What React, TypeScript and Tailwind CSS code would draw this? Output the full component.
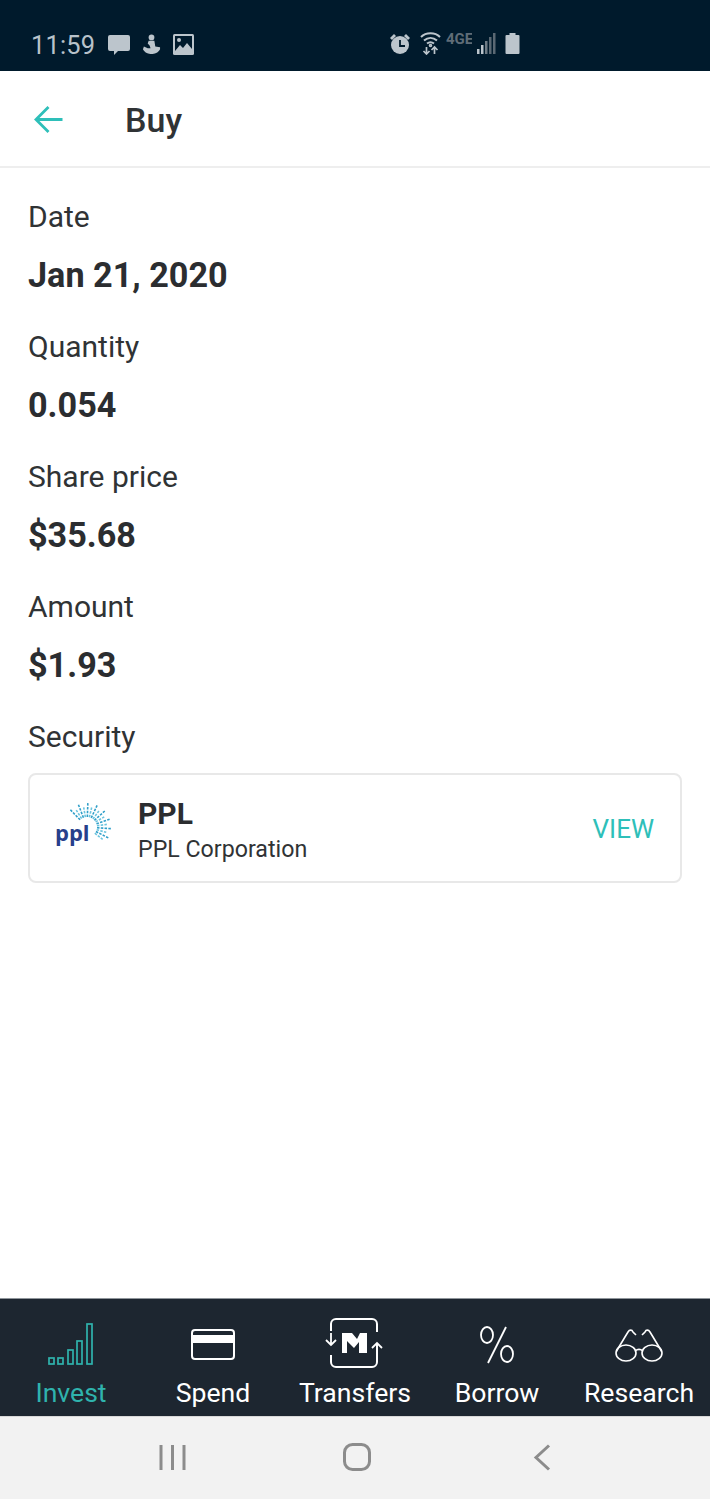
import React from "react";

const Field = ({ label, value }: { label: string; value: string }) => (
  <div className="flex flex-col h-[130px]">
    <div className="h-[58px] pt-[30px] leading-[38px] text-[30px] text-[#303335]">{label}</div>
    <div className="h-[72px] text-[34.2px] leading-[44px] font-bold text-[#2b2d30] pt-[27px]">{value}</div>
  </div>
);

const Rays = () => {
  const rays: React.ReactNode[] = [];
  for (let i = 0; i < 16; i++) {
    const a = (-44 + i * 11.5) * (Math.PI / 180);
    const c = i % 2 === 0 ? "#2f9fc9" : "#6cc4de";
    const r0 = 10;
    const r1 = i % 2 === 0 ? 25 : 20;
    rays.push(
      <line key={i} x1={33 + r0 * Math.sin(a)} y1={24 - r0 * Math.cos(a)} x2={33 + r1 * Math.sin(a)} y2={24 - r1 * Math.cos(a)} stroke={c} strokeWidth="1.6" strokeDasharray="2.5 1.3" />
    );
  }
  return (
    <svg className="absolute left-0 top-0" width="60" height="50" viewBox="0 0 60 50">
      {rays}
    </svg>
  );
};

const Nav = ({ label, active, children }: { label: string; active?: boolean; children: React.ReactNode }) => (
  <div className={`flex flex-col items-center ${active ? "text-[#2fb3ad]" : "text-white"}`}>
    <div className="h-[58px] w-full flex items-end justify-center">{children}</div>
    <div className="text-[26.6px] leading-[36px] mt-[7px] whitespace-nowrap">{label}</div>
  </div>
);

export default function App() {
  return (
    <div className="w-[710px] h-[1499px] flex flex-col bg-white overflow-hidden font-['Roboto',sans-serif]">
      {/* status bar */}
      <div className="h-[71px] shrink-0 bg-[#001a2c] flex items-end pb-[11px] relative text-[#b8c2ca]">
        <span className="ml-[31px] text-[25.4px] leading-[30px] tracking-[0.2px]">11:59</span>
        <svg className="ml-[12px] mb-[4px]" width="24" height="22" viewBox="0 0 24 22" fill="#bcc5cc"><path d="M3 1h18a2 2 0 0 1 2 2v12a2 2 0 0 1-2 2H11l-4 4v-4H3a2 2 0 0 1-2-2V3a2 2 0 0 1 2-2z" /></svg>
        <svg className="ml-[11px] mb-[5px]" width="19" height="21" viewBox="0 0 20 22" fill="#bcc5cc"><circle cx="10" cy="3.5" r="3" /><path d="M7 7h6l1 6 5 1v2c-2 4-6 5-9 5s-7-1-9-5l1-3 4 2h3l-1-3-2-2z" /></svg>
        <svg className="ml-[12px] mb-[5px]" width="21" height="21" viewBox="0 0 21 21"><rect width="21" height="21" rx="1.5" fill="#bcc5cc" /><rect x="2" y="2" width="17" height="15" fill="#001a2c" /><circle cx="6" cy="6" r="2" fill="#bcc5cc" /><path d="M2 17l5-6 3 3 4-5 5 6v2z" fill="#bcc5cc" /></svg>

        <svg className="absolute left-[389px] top-[33px]" width="22" height="22" viewBox="0 0 22 22" fill="#bcc5cc"><circle cx="11" cy="12" r="9" /><path d="M1 5l4-4 2 2-4 4zM21 5l-4-4-2 2 4 4z" /><path d="M11 7v6h5" stroke="#001a2c" strokeWidth="1.8" fill="none" /></svg>
        <svg className="absolute left-[420px] top-[31px]" width="21" height="24" viewBox="0 0 21 24" fill="none" stroke="#bcc5cc" strokeWidth="2"><path d="M1 6c5-5 14-5 19 0M4 9.5c4-3.500 9-3.500 13 0M7 12.500c2-1.500 5-1.500 7 0" /><circle cx="10.500" cy="14.500" r="0.800" /><path d="M6.500 16v7M3.500 20l3 3 3-3M14.500 23v-7M11.500 19l3-3 3 3" strokeWidth="1.700" /></svg>
        <div className="absolute left-[446px] top-[31px] text-[#5f6c77] text-[15px] leading-[16px] font-bold tracking-[0px] w-[26px] overflow-hidden whitespace-nowrap">4GE</div>
        <svg className="absolute left-[476px] top-[33px]" width="20" height="21" viewBox="0 0 20 21"><rect x="1" y="16" width="2.500" height="5" fill="#bcc5cc" /><rect x="5" y="12" width="2.500" height="9" fill="#bcc5cc" /><rect x="9" y="8" width="2.500" height="13" fill="#6f7c86" /><rect x="13" y="4" width="2.500" height="17" fill="#5b6873" /><rect x="17" y="0" width="2.500" height="21" fill="#5b6873" /></svg>
        <svg className="absolute left-[505px] top-[33px]" width="15" height="21" viewBox="0 0 15 21" fill="#bcc5cc"><path d="M4.500 0h6v2h3a1 1 0 0 1 1 1v17a1 1 0 0 1-1 1h-12a1 1 0 0 1-1-1V3a1 1 0 0 1 1-1h3z" /></svg>
      </div>

      {/* header */}
      <div className="h-[97px] shrink-0 border-b-2 border-[#eeeeee] flex items-center relative">
        <svg className="ml-[34px] mt-[1px]" width="29" height="29" viewBox="0 0 29 29" fill="none" stroke="#2ebfb9" strokeWidth="2.800"><path d="M1.500 14.500h27M14.500 2L2 14.500 14.500 27" /></svg>
        <span className="ml-[62px] mt-[3px] text-[34px] leading-[40px] font-medium text-[#303335]">Buy</span>
      </div>

      {/* body */}
      <div className="flex-1 px-[28px] flex flex-col">
        <div>
          <Field label="Date" value="Jan 21, 2020" />
          <Field label="Quantity" value="0.054" />
          <Field label="Share price" value="$35.68" />
          <Field label="Amount" value="$1.93" />
        </div>
        <div className="text-[30px] leading-[38px] text-[#303335] mt-[30px]">Security</div>
        <div className="mt-[17px] h-[110px] border-2 border-[#e8e8e8] rounded-[8px] flex items-center">
          <div className="relative w-[60px] h-[50px] ml-[24px] shrink-0">
            <Rays />
            <span className="absolute left-[1px] top-[16px] text-[#27408b] text-[22px] leading-[26px] font-bold font-['Open_Sans',sans-serif]">ppl</span>
          </div>
          <div className="ml-[24px] flex-1 pt-[4px]">
            <div className="text-[30px] leading-[34px] font-bold text-[#2b2d30]">PPL</div>
            <div className="text-[23.2px] leading-[30px] text-[#303335] mt-[3px]">PPL Corporation</div>
          </div>
          <span className="mr-[26px] mt-[2px] text-[26px] text-[#2ebfb9]">VIEW</span>
        </div>
      </div>

      {/* tab bar */}
      <div className="h-[118px] shrink-0 bg-[#1d2630] grid grid-cols-5 pt-[11px] border-t border-[#8f959b]">
        <Nav label="Invest" active>
          <svg className="mb-[3px] ml-[-1px]" width="46" height="42" viewBox="0 0 46 42" fill="none" stroke="#2fb3ad" strokeWidth="1.7"><rect x="1" y="35" width="5" height="6" /><rect x="10" y="35" width="5" height="6" /><rect x="20" y="27" width="5" height="14" /><rect x="29" y="18" width="5" height="23" /><rect x="39" y="1" width="5" height="40" /></svg>
        </Nav>
        <Nav label="Spend">
          <svg className="mb-[8px]" width="44" height="31" viewBox="0 0 44 31"><rect x="1" y="1" width="42" height="29" rx="3" fill="none" stroke="#fff" strokeWidth="2" /><rect x="1" y="6" width="42" height="8" fill="#fff" /></svg>
        </Nav>
        <Nav label="Transfers">
          <svg width="60" height="50" viewBox="0 0 60 50" fill="none" stroke="#fff" strokeWidth="2"><path d="M6 13V6a5 5 0 0 1 5-5h36a5 5 0 0 1 5 5v8M6 37v7a5 5 0 0 0 5 5h36a5 5 0 0 0 5-5V26" /><path d="M6 15v12M1 22l5 5 5-5M52 37V25M47 30l5-5 5 5" strokeWidth="1.800" /><path d="M17 15h10l5 6 3-6h7v20h-8V24l-5 6-7-7v12h-5z" fill="#fff" stroke="none" /></svg>
        </Nav>
        <Nav label="Borrow">
          <svg className="mb-[4px]" width="36" height="38" viewBox="0 0 36 38" fill="none" stroke="#fff" strokeWidth="1.800"><ellipse cx="8" cy="9" rx="6" ry="8" /><ellipse cx="28" cy="28" rx="6" ry="8" /><path d="M27 1L9 37" /></svg>
        </Nav>
        <Nav label="Research">
          <svg className="mb-[5px]" width="48" height="34" viewBox="0 0 48 34" fill="none" stroke="#fff" strokeWidth="1.600"><ellipse cx="11" cy="24" rx="10" ry="8" /><ellipse cx="37" cy="24" rx="10" ry="8" /><path d="M20 22c2.500-2 5.500-2 8 0M1.500 22L13 3c1.500-2.500 4-2.500 5 0l3 3M46.500 22L35 3c-1.500-2.500-4-2.500-5 0l-3 3" /></svg>
        </Nav>
      </div>

      {/* android nav */}
      <div className="h-[83px] shrink-0 bg-[#f2f2f2] relative border-t border-[#d8d8d8]">
        <svg className="absolute left-[159px] top-[27px]" width="27" height="27" viewBox="0 0 27 27" stroke="#8c8c8c" strokeWidth="3"><path d="M2 1v25M13.500 1v25M25 1v25" /></svg>
        <svg className="absolute left-[343px] top-[26px]" width="28" height="28" viewBox="0 0 28 28" fill="none" stroke="#8c8c8c" strokeWidth="3"><rect x="1.500" y="1.500" width="25" height="25" rx="8" /></svg>
        <svg className="absolute left-[533px] top-[27px]" width="18" height="27" viewBox="0 0 18 27" fill="none" stroke="#8c8c8c" strokeWidth="3"><path d="M16 1.500L3 13.500l13 12" /></svg>
      </div>
    </div>
  );
}
